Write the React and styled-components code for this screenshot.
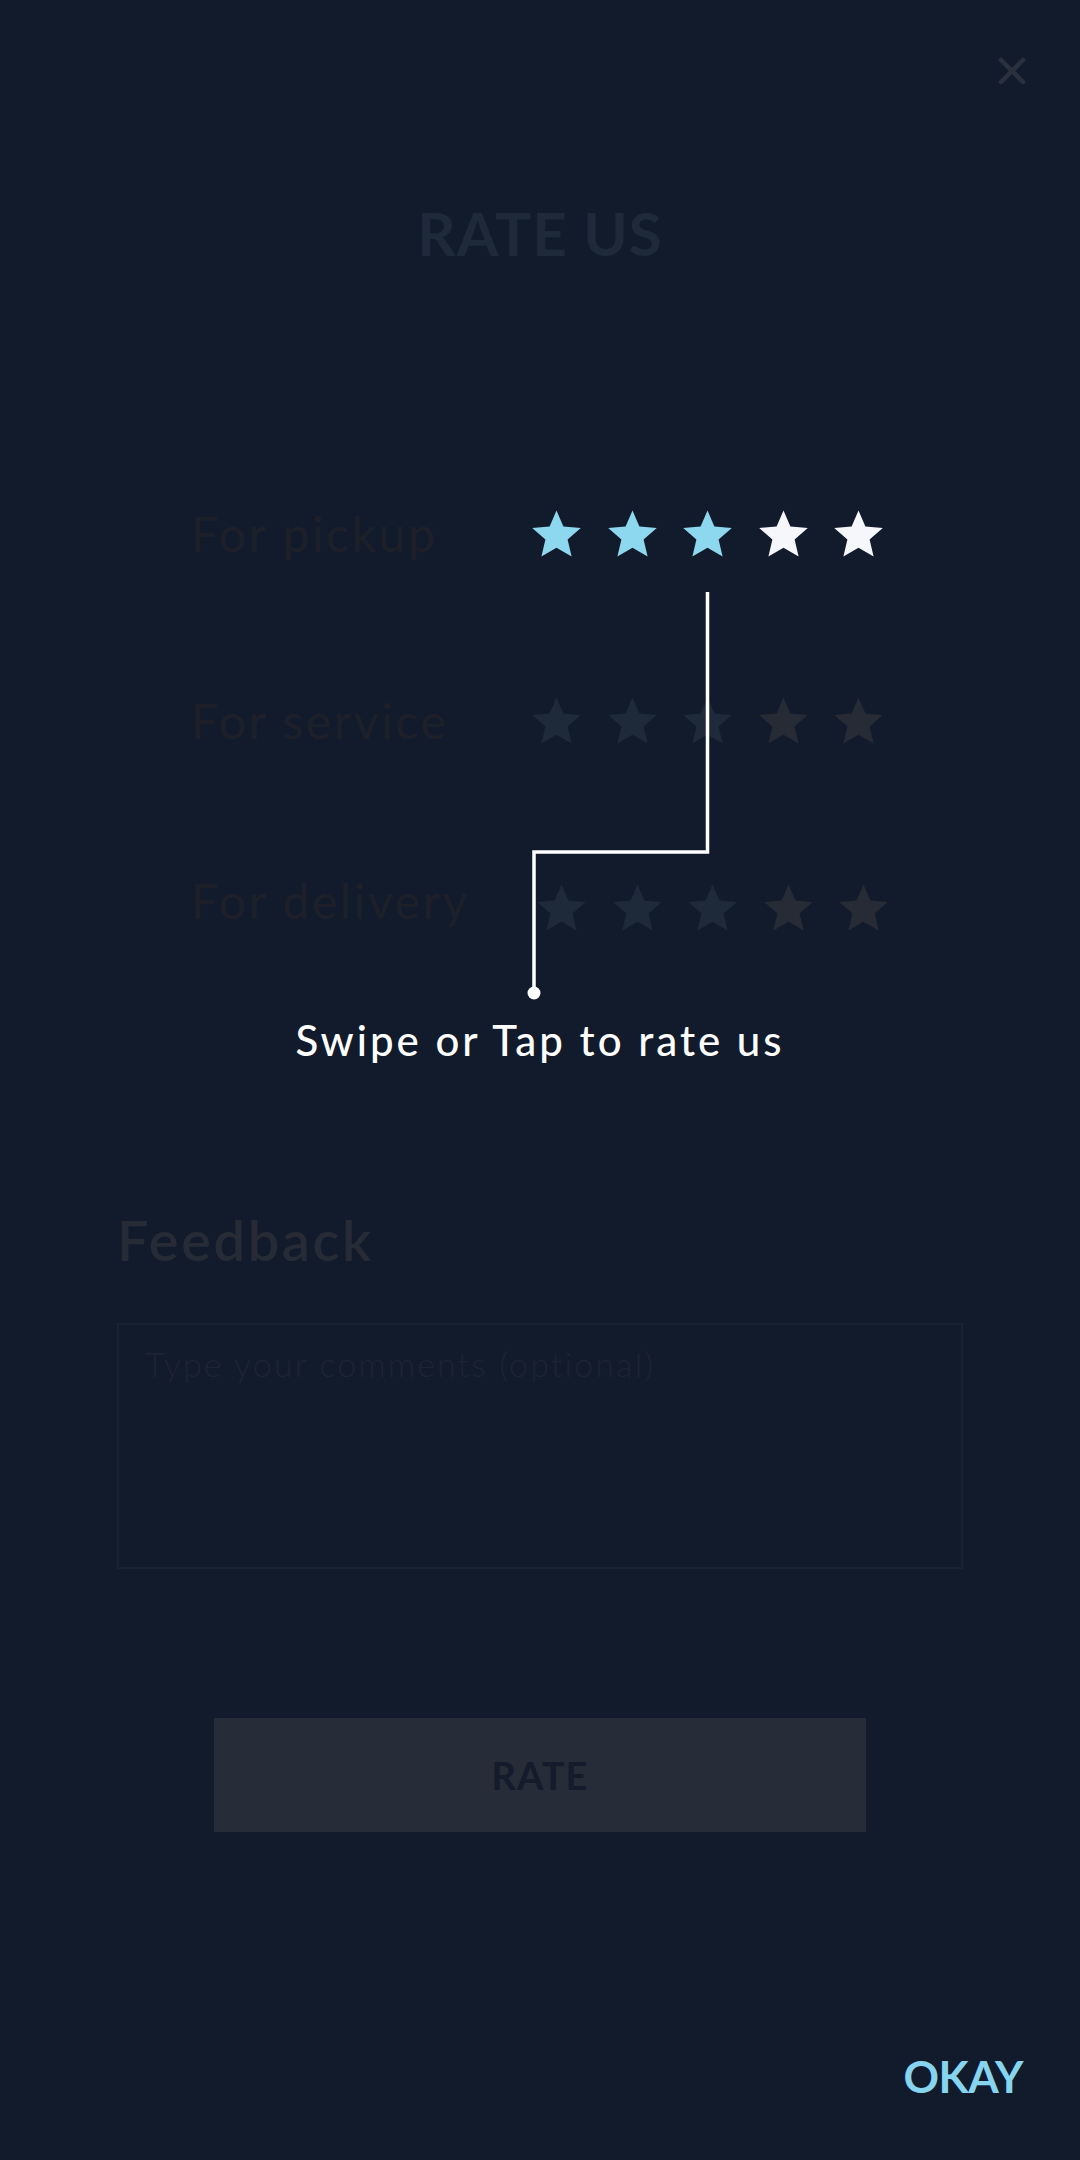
import React from "react";
import styled, { createGlobalStyle } from "styled-components";

const GlobalStyle = createGlobalStyle`
  html, body {
    margin: 0;
    padding: 0;
    background: #121b2c;
  }
  * {
    box-sizing: border-box;
  }
`;

const Page = styled.div`
  position: relative;
  min-height: 2160px;
  display: flex;
  flex-direction: column;
  background: #121b2c;
  font-family: Lato, "Noto Sans", sans-serif;
  overflow: hidden;
`;

const TopBar = styled.div`
  display: flex;
  justify-content: flex-end;
  padding: 51px 48px 0 0;
`;

const CloseButton = styled.button`
  width: 40px;
  height: 40px;
  padding: 0;
  border: none;
  background: none;
  display: flex;
  align-items: center;
  justify-content: center;
`;

const Title = styled.h1`
  margin: 106px 0 0;
  text-align: center;
  font-size: 60px;
  line-height: 72px;
  font-weight: 700;
  letter-spacing: 1px;
  color: #1e2a3a;
`;

const Ratings = styled.div`
  margin-top: 171px;
  padding-left: 191px;
  display: flex;
  flex-direction: column;
`;

const Row = styled.div`
  height: 187px;
  display: flex;
  align-items: center;
`;

const Label = styled.span`
  width: 341px;
  font-size: 48px;
  line-height: 1.2;
  letter-spacing: 2.6px;
  color: #1d2029;
  margin-top: ${(p) => p.$lift || 0}px;
`;

const Stars = styled.div`
  display: flex;
  gap: 26.5px;
  margin-left: ${(p) => p.$shift || 0}px;
`;

const StarIcon = styled.svg`
  width: 49px;
  height: 47px;
  display: block;
  fill: ${(p) => p.$color};
`;

const Hint = styled.p`
  margin: 14px 0 0;
  text-align: center;
  font-size: 42px;
  line-height: 1.2;
  font-weight: 500;
  letter-spacing: 3px;
  color: #ffffff;
`;

const FeedbackSection = styled.div`
  margin-top: 141px;
  padding: 0 117px;
  display: flex;
  flex-direction: column;
`;

const FeedbackTitle = styled.h2`
  margin: 0;
  font-size: 56px;
  line-height: 1.2;
  font-weight: 600;
  letter-spacing: 2.6px;
  color: #272b35;
`;

const Comment = styled.textarea`
  margin-top: 49px;
  width: 100%;
  height: 246px;
  border: 2px solid #1a2232;
  background: transparent;
  padding: 19px 26px;
  font-family: Lato, "Noto Sans", sans-serif;
  font-size: 34px;
  font-weight: 300;
  line-height: 1.2;
  letter-spacing: 2.1px;
  color: #3a4150;
  resize: none;
  outline: none;

  &::placeholder {
    color: #1e2430;
  }
`;

const RateButton = styled.button`
  margin: 149px auto 0;
  width: 652px;
  height: 114px;
  border: none;
  background: #262c38;
  font-family: Lato, "Noto Sans", sans-serif;
  font-size: 38px;
  font-weight: 700;
  letter-spacing: 1px;
  color: #141b2a;
`;

const Footer = styled.div`
  margin-top: auto;
  display: flex;
  justify-content: flex-end;
  padding: 0 57px 57px 0;
`;

const OkayButton = styled.button`
  padding: 0;
  border: none;
  background: none;
  font-family: Lato, "Noto Sans", sans-serif;
  font-size: 44px;
  line-height: 1.2;
  font-weight: 700;
  letter-spacing: -0.5px;
  color: #86d4ee;
`;

const Connector = styled.svg`
  position: absolute;
  left: 0;
  top: 0;
  width: 1080px;
  height: 2160px;
  pointer-events: none;
`;

const STAR_POINTS =
  "24.5,0.5 31.4,16.5 48.8,18 35.6,29.6 39.6,46.6 24.5,37.7 9.4,46.6 13.4,29.6 0.2,18 17.6,16.5";

const Star = ({ color }) => (
  <StarIcon viewBox="0 0 49 47" $color={color}>
    <polygon points={STAR_POINTS} />
  </StarIcon>
);

const rows = [
  { label: "For pickup", active: true },
  { label: "For service" },
  { label: "For delivery", shift: 5, lift: -14 },
];

const starColor = (i, active) => {
  if (active) return i < 3 ? "#8dd7ef" : "#f5f7fa";
  return i < 3 ? "#1e293a" : "#262b35";
};

const App = () => {
  return (
    <Page>
      <GlobalStyle />
      <TopBar>
        <CloseButton aria-label="Close">
          <svg width="28" height="28" viewBox="0 0 28 28">
            <path
              d="M3 3 L25 25 M25 3 L3 25"
              stroke="#2b313c"
              strokeWidth="4.5"
              strokeLinecap="round"
            />
          </svg>
        </CloseButton>
      </TopBar>

      <Title>RATE US</Title>

      <Ratings>
        {rows.map((row) => (
          <Row key={row.label}>
            <Label $lift={row.lift}>{row.label}</Label>
            <Stars $shift={row.shift}>
              {[0, 1, 2, 3, 4].map((i) => (
                <Star key={i} color={starColor(i, row.active)} />
              ))}
            </Stars>
          </Row>
        ))}
      </Ratings>

      <Hint>Swipe or Tap to rate us</Hint>

      <FeedbackSection>
        <FeedbackTitle>Feedback</FeedbackTitle>
        <Comment placeholder="Type your comments (optional)" />
      </FeedbackSection>

      <RateButton>RATE</RateButton>

      <Footer>
        <OkayButton>OKAY</OkayButton>
      </Footer>

      <Connector viewBox="0 0 1080 2160">
        <path
          d="M707.5 592 V852 H534 V993"
          fill="none"
          stroke="#ffffff"
          strokeWidth="3.5"
        />
        <circle cx="534" cy="993" r="6.5" fill="#ffffff" />
      </Connector>
    </Page>
  );
};

export default App;
